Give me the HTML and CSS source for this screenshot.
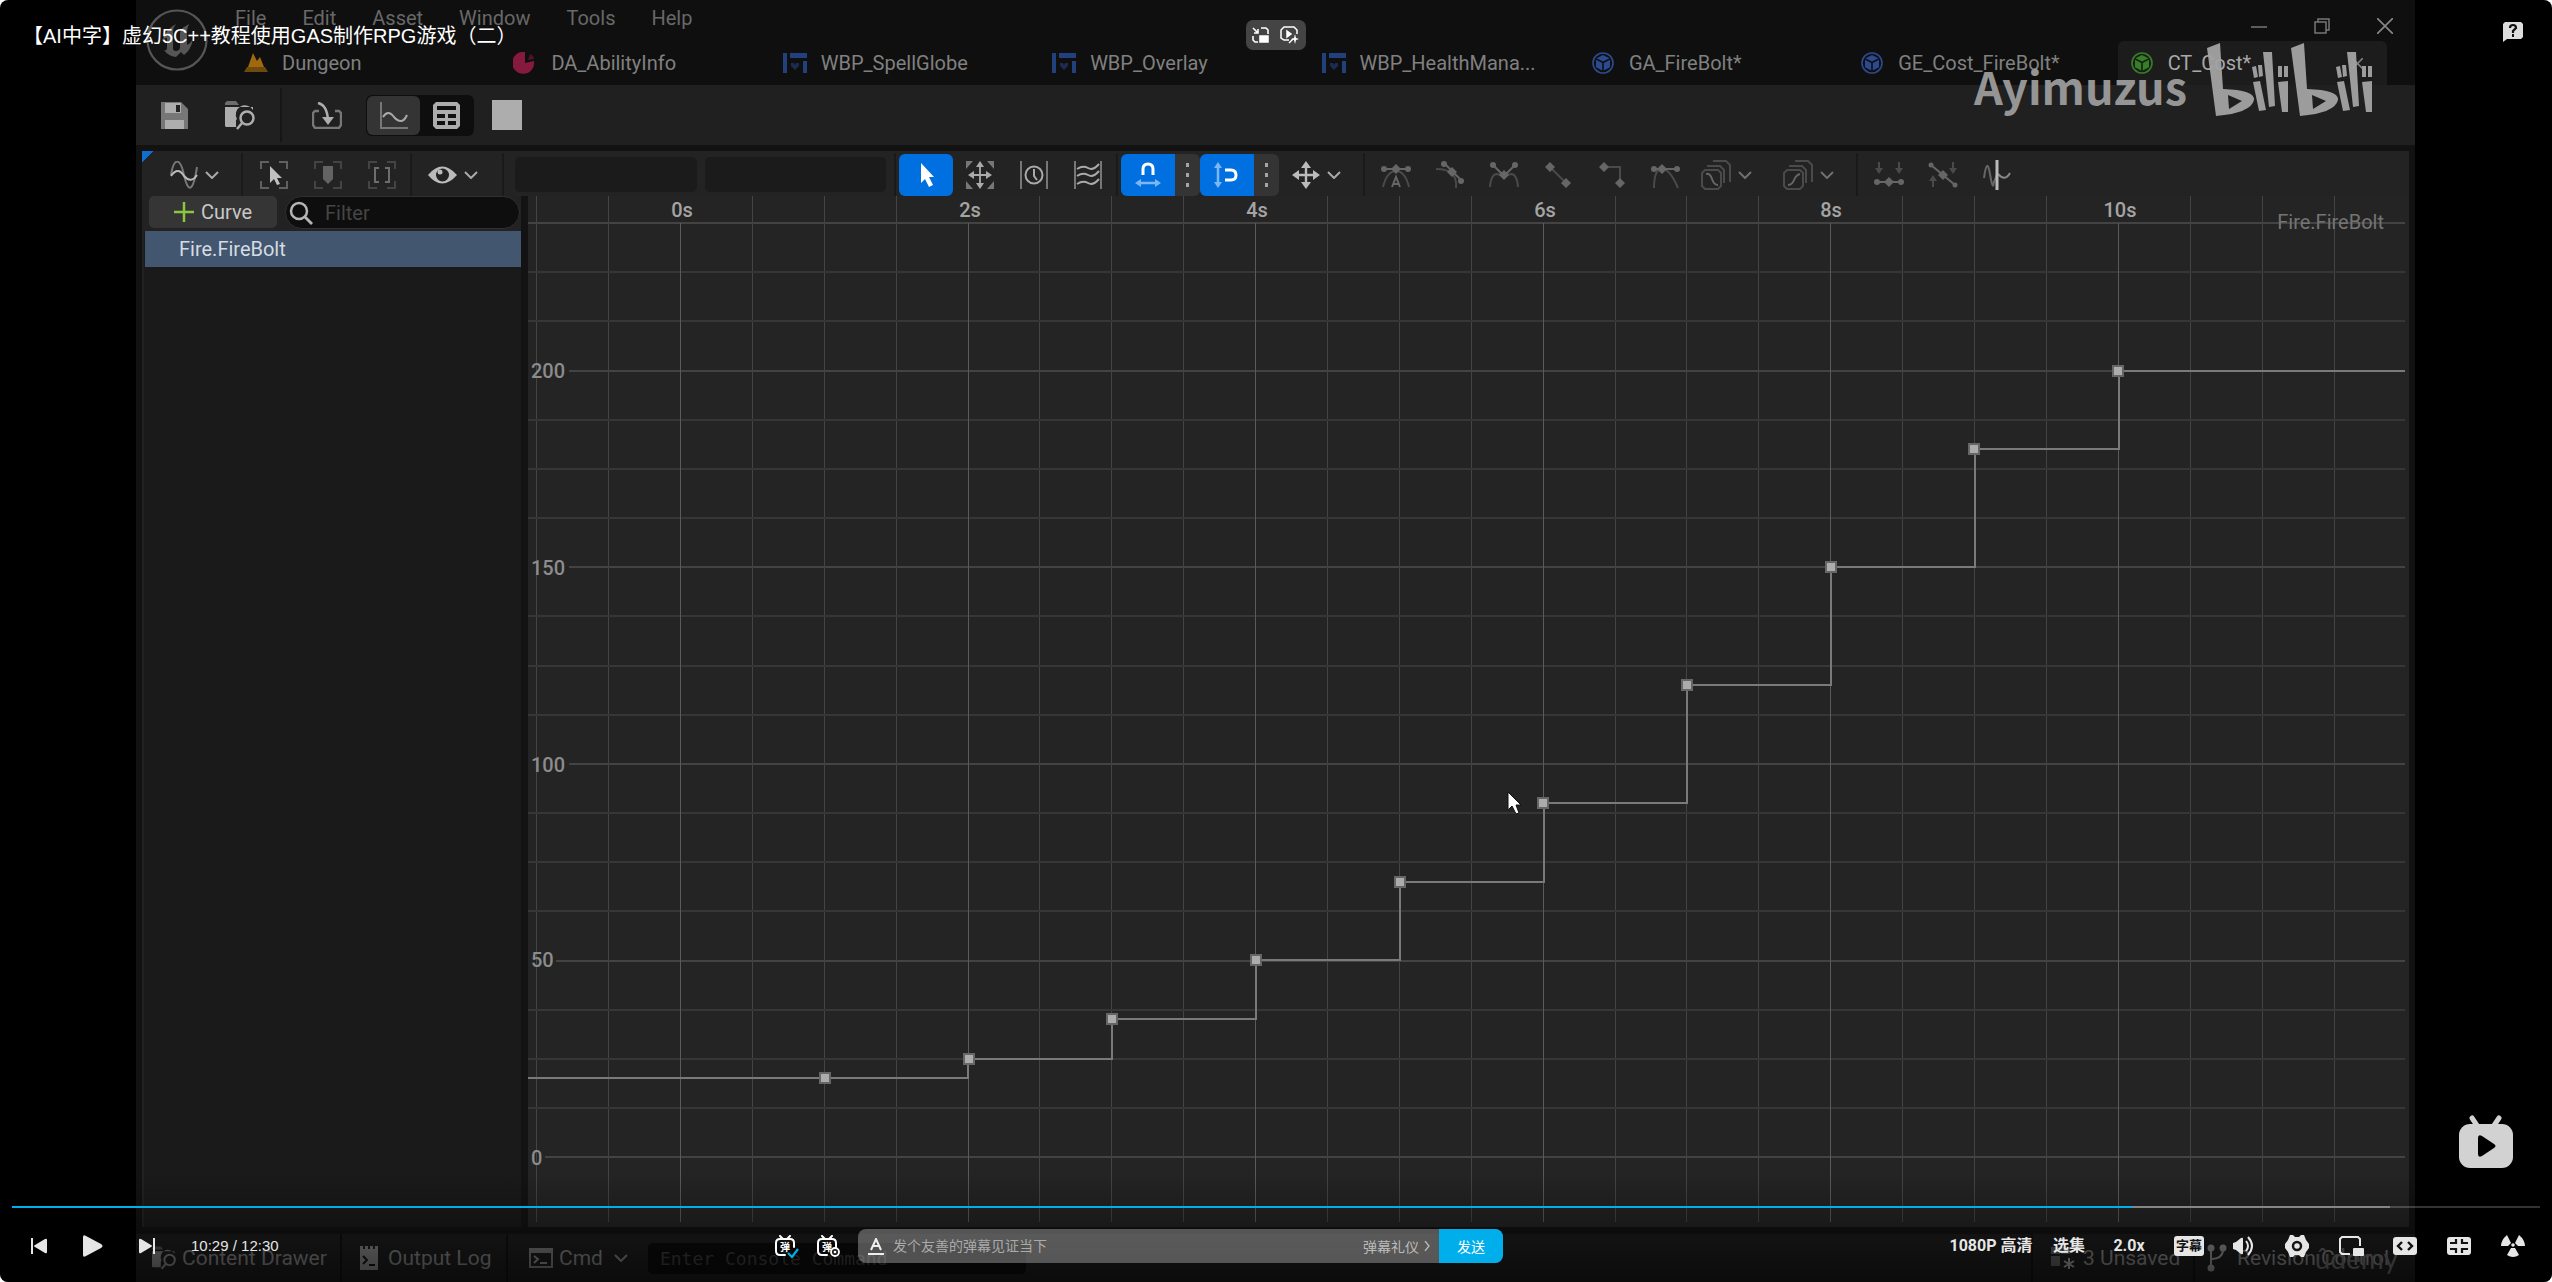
FILE: index.html
```html
<!DOCTYPE html>
<html lang="zh-CN">
<head>
<meta charset="utf-8">
<title>【AI中字】虚幻5C++教程使用GAS制作RPG游戏（二）</title>
<link rel="stylesheet" href="styles.css">
</head>
<body>
<svg class="sprite" aria-hidden="true">
  <symbol id="chev" viewBox="0 0 14 8"><path d="M1 1l6 6 6-6" fill="none" stroke="currentColor" stroke-width="2"/></symbol>
  <symbol id="widget" viewBox="0 0 24 20"><path d="M0 0h4v20H0zM7 0h17v5H7zM20 8h4v12h-4z" fill="#22407c"/><path d="M12 17l-4-4v-3h3l1 2 1-2h3v3z" fill="#1c2b50"/></symbol>
  <symbol id="cube" viewBox="0 0 22 22"><circle cx="11" cy="11" r="10" fill="none" stroke="currentColor" stroke-width="1.600"/><path d="M11 3l6.500 3.200L11 9.600 4.500 6.200zM4 7.800l6.200 3.100v7.600L4 15.200zM18 7.800l-6.200 3.100v7.600L18 15.200z" fill="currentColor"/></symbol>
  <symbol id="frame" viewBox="0 0 28 28"><path d="M1 8V1h8M19 1h8v7M27 20v7h-8M9 27H1v-7" fill="none" stroke="#606060" stroke-width="2"/></symbol>
  <symbol id="folder" viewBox="0 0 30 29"><path d="M0 4V2l2-2h9l3 4z" fill="currentColor" opacity=".55"/><path d="M0 6h28v3a9 9 0 0 0-16 9l-1 1v7H1l-1-1z" fill="currentColor"/><circle cx="22" cy="17" r="6.500" fill="none" stroke="currentColor" stroke-width="2.500"/><path d="M17 22l-5 6" stroke="currentColor" stroke-width="2.500"/></symbol>
  <symbol id="danmu" viewBox="0 0 22 22"><path d="M5 1l3 3M15 1l-3 3M10 20H5q-4 0-4-4V8q0-4 4-4h10q4 0 4 4v4" fill="none" stroke="#fff" stroke-width="2" stroke-linecap="round"/></symbol>
</svg>

<div class="player">
  <main class="video">
    <header class="titlebar">
      <svg class="unreal" viewBox="0 0 62 62"><circle cx="31" cy="31" r="29.500" fill="#141414" stroke="#565656" stroke-width="2.200"/><path d="M16 32q4-12 14-17-3 4-3 7v17q0 3 3 3t4-3V25q0-5 4-7l5-3q-2 4-2 8v13q4-2 6-6-2 11-9 16l-3-3-5 5q-8-1-12-7 3 1 3-2V30q-1-3-5 2z" fill="#555"/></svg>
      <nav class="menu"><a href="#">File</a><a href="#">Edit</a><a href="#">Asset</a><a href="#">Window</a><a href="#">Tools</a><a href="#">Help</a></nav>
      <div class="winbtns">
        <svg width="16" height="16" viewBox="0 0 16 16"><path d="M0 9h16" stroke="#777" stroke-width="1.500"/></svg>
        <svg width="16" height="16" viewBox="0 0 16 16"><path d="M1 4h11v11H1zM4 4V1h11v11h-3" fill="none" stroke="#777" stroke-width="1.500"/></svg>
        <svg width="16" height="16" viewBox="0 0 16 16"><path d="M0 0l16 16M16 0L0 16" stroke="#888" stroke-width="1.600"/></svg>
      </div>
      <nav class="tabs">
        <a class="tab" href="#"><svg width="24" height="20" viewBox="0 0 24 20"><path d="M4 14L9 0l4 8 3-4 4 10z" fill="#a0690f"/><path d="M3 14l-3 5h24l-3-5" fill="#6f4a0e"/></svg>Dungeon</a>
        <a class="tab" href="#"><svg width="24" height="22" viewBox="0 0 24 22"><path d="M12 0v11l9-2a11 11 0 1 1-9-9z" fill="#861a3e"/><path d="M15 8l2-6q4 2 4 5z" fill="#4d1528"/></svg>DA_AbilityInfo</a>
        <a class="tab" href="#"><svg width="24" height="20"><use href="#widget"/></svg>WBP_SpellGlobe</a>
        <a class="tab" href="#"><svg width="24" height="20"><use href="#widget"/></svg>WBP_Overlay</a>
        <a class="tab" href="#"><svg width="24" height="20"><use href="#widget"/></svg>WBP_HealthMana...</a>
        <a class="tab" href="#"><svg class="blue" width="24" height="22"><use href="#cube"/></svg>GA_FireBolt*</a>
        <a class="tab" href="#"><svg class="blue" width="24" height="22"><use href="#cube"/></svg>GE_Cost_FireBolt*</a>
        <a class="tab active" href="#"><svg class="green" width="24" height="22"><use href="#cube"/></svg>CT_Cost*<svg class="tabclose" width="11" height="11" viewBox="0 0 11 11"><path d="M0 0l11 11M11 0L0 11" stroke="#888" stroke-width="1.500"/></svg></a>
      </nav>
    </header>

    <div class="assetbar">
      <button class="save" aria-label="Save"><svg width="27" height="27" viewBox="0 0 27 27"><path d="M0 0h20l7 7v20H0z" fill="#777"/><path d="M4 1h16v10H4zM4 18h19v9H4z" fill="#adadad"/><path d="M15 3h4v7h-4z" fill="#222"/></svg></button>
      <button class="browse" aria-label="Browse"><svg width="30" height="29"><use href="#folder"/></svg></button>
      <button class="import" aria-label="Reimport"><svg width="30" height="27" viewBox="0 0 30 27"><path d="M7 9H3l-2 2v12l2 3h24l2-3V11l-2-2h-4" fill="none" stroke="#777" stroke-width="2.400"/><path d="M6 1q9 2 10 17" fill="none" stroke="#adadad" stroke-width="2.500"/><path d="M10 15h12l-6 8z" fill="#adadad"/></svg></button>
      <div class="viewtoggle">
        <button class="on" aria-label="Curve view"><svg width="28" height="27" viewBox="0 0 28 27"><path d="M1 0v26h27" fill="none" stroke="#777" stroke-width="2"/><path d="M3 15q5-8 11 0 8 9 13-2" fill="none" stroke="#aaa" stroke-width="2"/></svg></button>
        <button aria-label="Table view"><svg width="27" height="27" viewBox="0 0 27 27"><path d="M3 0h21l3 3v21l-3 3H3l-3-3V3z" fill="#adadad"/><path d="M4 4h19v4H4zM4 12h8v4H4zM15 12h8v4h-8zM4 19h8v4H4zM15 19h8v4h-8z" fill="#111"/></svg></button>
      </div>
      <span class="swatch"></span>
    </div>

    <div class="panel">
      <div class="curvebar">
        <div class="grp g1"><svg width="28" height="28" viewBox="0 0 28 28"><path d="M1 14C4-4 10-4 14 14s9 18 13-8" fill="none" stroke="#777" stroke-width="2"/><path d="M1 15q7-10 13 0 7 8 13-1" fill="none" stroke="#bbb" stroke-width="2"/></svg><svg class="chev" width="14" height="8"><use href="#chev"/></svg></div>
        <div class="grp g2">
          <button class="t" aria-label="Frame selection"><svg width="28" height="28" viewBox="0 0 28 28"><use href="#frame"/><path d="M10 5l12 12h-5l3 6-3 1-3-6-4 4z" fill="#c0c0c0"/></svg></button>
          <button class="t dim" aria-label="Frame playback"><svg width="28" height="28" viewBox="0 0 28 28"><use href="#frame"/><path d="M9 5h10v13l-5 5-5-5z" fill="#999"/></svg></button>
          <button class="t dim" aria-label="Frame range"><svg width="28" height="28" viewBox="0 0 28 28"><use href="#frame"/><path d="M11 7H7v14h4M17 7h4v14h-4" fill="none" stroke="#aaa" stroke-width="2"/></svg></button>
        </div>
        <div class="grp g3"><svg width="29" height="18" viewBox="0 0 29 18"><path d="M0 9Q14-8 29 9 14 26 0 9z" fill="#bbb"/><circle cx="14.500" cy="9" r="6.500" fill="#222"/><circle cx="12" cy="6" r="2.500" fill="#bbb"/></svg><svg class="chev" width="14" height="8"><use href="#chev"/></svg></div>
        <div class="grp g4"><input class="num" aria-label="Key time" type="text"><input class="num" aria-label="Key value" type="text"></div>
        <div class="grp g5">
          <button class="t sel" aria-label="Select"><svg width="28" height="28" viewBox="0 0 28 28"><path d="M9 2l13 14h-5l4 8-4 2-4-8-4 4z" fill="#fff"/></svg></button>
          <button class="t" aria-label="Transform"><svg width="28" height="28" viewBox="0 0 28 28"><path d="M0 0h7L0 8zM28 0h-7l7 8zM0 28h7l-7-8zM28 28h-7l7-8z" fill="#777"/><path d="M14 4v20M4 14h20" stroke="#aaa" stroke-width="1.800"/><path d="M14 0l4 6h-8zM14 28l4-6h-8zM2 14l6-4v8zM26 14l-6-4v8z" fill="#aaa"/></svg></button>
          <button class="t" aria-label="Retime"><svg width="28" height="28" viewBox="0 0 28 28"><path d="M1 0v28M27 0v28" stroke="#777" stroke-width="2"/><circle cx="14" cy="14" r="8.500" fill="none" stroke="#aaa" stroke-width="2"/><path d="M14 8v7l3 4" fill="none" stroke="#aaa" stroke-width="2"/></svg></button>
          <button class="t" aria-label="Multi-scale"><svg width="28" height="28" viewBox="0 0 28 28"><path d="M1 0v28M27 0v28" stroke="#777" stroke-width="2"/><path d="M3 8q6-4 11-1t11-4M3 15q6-4 11-1t11-4M3 23q6-4 11-1t11-4" fill="none" stroke="#aaa" stroke-width="2"/></svg></button>
        </div>
        <div class="grp g6">
          <button class="t sel left" aria-label="Snap time"><svg width="28" height="28" viewBox="0 0 28 28"><path d="M9 14V8q0-5 5-5t5 5v6" fill="none" stroke="#fff" stroke-width="3"/><path d="M4 22h20" stroke="#7db6f5" stroke-width="2.500"/><path d="M1 22l6-4v8zM27 22l-6-4v8z" fill="#7db6f5"/></svg></button>
          <button class="more" aria-label="Time snap options"><i></i><i></i><i></i></button>
          <button class="t sel left" aria-label="Snap value"><svg width="28" height="28" viewBox="0 0 28 28"><path d="M12 9h6q5 0 5 5t-5 5h-6" fill="none" stroke="#fff" stroke-width="3"/><path d="M5 4v20" stroke="#7db6f5" stroke-width="2.500"/><path d="M5 1l4 6H1zM5 27l4-6H1z" fill="#7db6f5"/></svg></button>
          <button class="more" aria-label="Value snap options"><i></i><i></i><i></i></button>
          <svg class="move" width="28" height="28" viewBox="0 0 28 28"><path d="M14 4v20M4 14h20" stroke="#bbb" stroke-width="2.400"/><path d="M14 0l5 7H9zM14 28l5-7H9zM0 14l7-5v10zM28 14l-7-5v10z" fill="#bbb"/></svg><svg class="chev" width="14" height="8"><use href="#chev"/></svg>
        </div>
        <div class="grp g7">
          <button class="t" aria-label="Auto tangent"><svg class="key" width="30" height="28" viewBox="0 0 30 28"><path class="arc" d="M2 26q4-16 13-16t13 16"/><path d="M4 8h22"/><circle cx="3" cy="8" r="3"/><circle cx="27" cy="8" r="3"/><path class="dot" d="M15 3l5 5-5 5-5-5z"/><path d="M11 26l4-10 4 10M12 23h6"/></svg></button>
          <button class="t" aria-label="User tangent"><svg class="key" width="30" height="28" viewBox="0 0 30 28"><path class="arc" d="M1 8q22 0 20 19"/><path d="M9 2l18 18"/><circle cx="9" cy="3" r="3"/><circle cx="26" cy="20" r="3"/><path class="dot" d="M17 6l5 5-5 5-5-5z"/></svg></button>
          <button class="t" aria-label="Break tangent"><svg class="key" width="30" height="28" viewBox="0 0 30 28"><path class="arc" d="M1 26Q2 13 8 13l7 2 7-2q6 0 7 13"/><path d="M4 4l11 11L26 4"/><circle cx="4" cy="4" r="3"/><circle cx="26" cy="4" r="3"/><path class="dot" d="M15 9l5 5-5 5-5-5z"/></svg></button>
          <button class="t" aria-label="Linear"><svg class="key" width="28" height="28" viewBox="0 0 28 28"><path class="arc" d="M6 6l16 16"/><path class="dot" d="M6 1l5 5-5 5-5-5zM22 17l5 5-5 5-5-5z"/></svg></button>
          <button class="t" aria-label="Constant"><svg class="key" width="28" height="28" viewBox="0 0 28 28"><path class="arc" d="M6 6h16v16"/><path class="dot" d="M6 1l5 5-5 5-5-5zM22 17l5 5-5 5-5-5z"/></svg></button>
          <button class="t" aria-label="Weighted"><svg class="key" width="30" height="28" viewBox="0 0 30 28"><path class="arc" d="M4 27Q4 8 12 8t16 19"/><path d="M3 8h25"/><circle cx="4" cy="8" r="3"/><circle cx="27" cy="8" r="3"/><path class="dot" d="M12 3l5 5-5 5-5-5z"/></svg></button>
          <button class="wide" aria-label="Pre-infinity"><svg class="key" width="30" height="30" viewBox="0 0 30 30"><path class="arc" d="M1 13l3-3h13l3 3v13l-3 3H4l-3-3zM6 6h13l4 4v13M12 1h13l4 4v17"/><path d="M5 14q4-1 6 5t6 6"/></svg><svg class="chev" width="14" height="8"><use href="#chev"/></svg></button>
          <button class="wide" aria-label="Post-infinity"><svg class="key" width="30" height="30" viewBox="0 0 30 30"><path class="arc" d="M1 13l3-3h13l3 3v13l-3 3H4l-3-3zM6 6h13l4 4v13M12 1h13l4 4v17"/><path d="M5 25q4 0 6-5t6-6"/></svg><svg class="chev" width="14" height="8"><use href="#chev"/></svg></button>
        </div>
        <div class="grp g8">
          <button class="t" aria-label="Flatten"><svg class="key" width="30" height="28" viewBox="0 0 30 28"><path class="arc" d="M5 1v8M25 1v8"/><path class="tip" d="M1 7h8l-4 6zM21 7h8l-4 6z"/><path d="M3 21h24"/><circle cx="3" cy="21" r="3"/><circle cx="27" cy="21" r="3"/><path class="dot" d="M15 16l5 5-5 5-5-5z"/></svg></button>
          <button class="t" aria-label="Straighten"><svg class="key" width="30" height="28" viewBox="0 0 30 28"><path class="arc" d="M5 26v-8M25 1v8"/><path class="tip" d="M1 20h8l-4-6zM21 7h8l-4 6z"/><path d="M3 4l24 20"/><circle cx="3" cy="4" r="2.500"/><circle cx="27" cy="24" r="2.500"/><path class="dot" d="M15 9l5 5-5 5-5-5z"/></svg></button>
          <button class="t" aria-label="Bake"><svg width="28" height="30" viewBox="0 0 28 30"><path d="M1 18Q4-4 7 14t4 8l3-7" fill="none" stroke="#666" stroke-width="2"/><path d="M15 14q7 8 12-1" fill="none" stroke="#888" stroke-width="2"/><path d="M14 0v30" stroke="#bbb" stroke-width="3"/></svg></button>
        </div>
      </div>

      <div class="work">
        <aside class="tree">
          <div class="treebar">
            <button class="addcurve"><svg width="20" height="20" viewBox="0 0 20 20"><path d="M10 0v20M0 10h20" stroke="#8cc63f" stroke-width="2.500"/></svg>Curve</button>
            <label class="filter"><svg width="24" height="24" viewBox="0 0 24 24"><circle cx="10" cy="10" r="8" fill="none" stroke="#b5b5b5" stroke-width="2.500"/><path d="M16 16l7 7" stroke="#b5b5b5" stroke-width="2.800"/></svg><input type="text" placeholder="Filter" aria-label="Filter"></label>
          </div>
          <div class="treerow">Fire.FireBolt</div>
        </aside>
        <svg class="graph" viewBox="0 1 1881 1031" role="img" aria-label="Fire.FireBolt curve">
          <path class="minor v" d="M8.500 0V1027M80.500 0V1027M224.500 0V1027M296.500 0V1027M368.500 0V1027M511.500 0V1027M583.500 0V1027M655.500 0V1027M799.500 0V1027M871.500 0V1027M943.500 0V1027M1087.500 0V1027M1158.500 0V1027M1230.500 0V1027M1374.500 0V1027M1446.500 0V1027M1518.500 0V1027M1662.500 0V1027M1734.500 0V1027M1806.500 0V1027"/>
          <path class="minor" d="M0 77H1877M0 126H1877M0 225H1877M0 274H1877M0 323H1877M0 421H1877M0 471H1877M0 520H1877M0 618H1877M0 667H1877M0 716H1877M0 815H1877M0 864H1877M0 913H1877"/>
          <path class="major" d="M0 28H1877M41 176H1877M41 372H1877M41 569H1877M28 766H1877M17 962H1877"/>
          <path class="major v" d="M152.500 28V1027M440.500 28V1027M727.500 28V1027M1015.500 28V1027M1302.500 28V1027M1590.500 28V1027"/>
          <g class="time"><text x="154" y="22">0s</text><text x="442" y="22">2s</text><text x="729" y="22">4s</text><text x="1017" y="22">6s</text><text x="1303" y="22">8s</text><text x="1592" y="22">10s</text></g>
          <g class="val"><text x="3" y="183">200</text><text x="3" y="380">150</text><text x="3" y="577">100</text><text x="3" y="772">50</text><text x="3" y="970">0</text></g>
          <text class="name" x="1856" y="34">Fire.FireBolt</text>
          <path class="curve" d="M0 883H440V864H584V824H728V765H872V687H1016V608H1159V490H1303V372H1447V254H1591V176H1877"/>
          <path class="pts" d="M292 878h10v10h-10zM436 859h10v10h-10zM579 819h10v10h-10zM723 760h10v10h-10zM867 682h10v10h-10zM1010 603h10v10h-10zM1154 485h10v10h-10zM1298 367h10v10h-10zM1441 249h10v10h-10zM1585 171h10v10h-10z"/>
          <path class="cursor" d="M980 597v18l4-4 4 8 3-1-3-8h5z"/>
        </svg>
      </div>
    </div>

    <footer class="statusbar">
      <span class="cell s1"><svg width="24" height="24"><use href="#folder"/></svg>Content Drawer</span>
      <span class="cell s2"><svg width="18" height="24" viewBox="0 0 18 24"><path d="M0 0h3v3h2V0h3v3h2V0h3v3h2V0h3v24H0z" fill="#858585"/><path d="M3 10l4 4-4 4M9 19h6" fill="none" stroke="#111" stroke-width="1.800"/></svg>Output Log</span>
      <span class="cell s3"><svg width="24" height="20" viewBox="0 0 24 20"><path d="M1 1h22v18H1z" fill="none" stroke="#777" stroke-width="2"/><path d="M0 0h24v5H0z" fill="#777"/><path d="M5 8l4 3-4 4M11 15h7" fill="none" stroke="#888" stroke-width="2"/></svg>Cmd<svg class="chev" width="14" height="8"><use href="#chev"/></svg><input class="console" type="text" placeholder="Enter Console Command" aria-label="Console command"></span>
      <span class="cell s4"><svg width="24" height="22" viewBox="0 0 24 22"><path d="M0 0h9v7H0zM10 0h9v7h-9zM0 9h9v10H0z" fill="#5a5a5a"/><path d="M18 11v11M13 14l10 6M23 14l-10 6" stroke="#999" stroke-width="2"/></svg>3 Unsaved</span>
      <span class="cell s5"><svg width="20" height="28" viewBox="0 0 20 28"><circle cx="4" cy="4" r="3.500" fill="#909090"/><circle cx="16" cy="4" r="3.500" fill="#909090"/><circle cx="4" cy="24" r="3.500" fill="#909090"/><path d="M4 5v18M16 5q0 10-12 10" fill="none" stroke="#909090" stroke-width="2"/></svg>Revision Control<span class="udemy">ûdemy</span></span>
    </footer>
  </main>

  <div class="shade"></div>
  <h1 class="title">【AI中字】虚幻5C++教程使用GAS制作RPG游戏（二）</h1>
  <div class="watermark"><span>Ayimuzus</span>
    <svg width="166" height="74" viewBox="0 0 166 74" fill="#a3a3a3"><g id="bl"><path d="M0 5L13 0l3 46q32 1 31 11-3 13-38 16z"/><path d="M21 52l14 6-13 8z" fill="#1f1f1f"/><path d="M46 39l7-1 6 29-7 1zM56 9h9l3 54-6 1zM71 39l10-1v31h-6zM45 24l4-1 2 11-4 1zM51 22h4l1 11-4 1zM71 23h4v11h-4zM77 23h4v11h-4z"/></g><use href="#bl" x="84"/></svg>
  </div>
  <div class="pill">
    <button aria-label="小窗播放"><svg width="17" height="16" viewBox="0 0 17 16" fill="none" stroke="#fff" stroke-width="1.600"><path d="M1 1l5 5M2 6h4V2M9 1h5l2 2v4M1 9v4l2 2h3"/><path d="M8 9h8v6H8z" fill="#fff"/></svg></button>
    <button aria-label="画面特效"><svg width="19" height="18" viewBox="0 0 19 18" fill="none" stroke="#fff" stroke-width="1.500"><path d="M9 14H4l-3-2V4l3-3h10l3 3v4"/><path d="M7 5l4 3-4 3z" fill="#fff"/><path d="M9 17l4-4"/><path d="M15 8l1 4 3 1-3 1-1 4-1-4-3-1 3-1z" fill="#fff" stroke="none"/></svg></button>
  </div>
  <button class="help" aria-label="帮助"><svg width="20" height="20" viewBox="0 0 20 20"><path d="M2 0h16l2 2v13l-2 2H4l-4 3V2z" fill="#ddd"/><path d="M7 6q0-3 3-3t3 3l-3 3v2" fill="none" stroke="#111" stroke-width="2.200"/><path d="M9 12h2v3H9z" fill="#111"/></svg></button>
  <button class="tv" aria-label="播放"><svg width="56" height="54" viewBox="0 0 56 54"><path d="M14 3l6 9M41 3l-6 9" stroke="#d2d2d2" stroke-width="5" stroke-linecap="round"/><rect x="1" y="9" width="54" height="44" rx="11" fill="#d2d2d2"/><path d="M20 23q0-4 4-2l12 8q3 2 0 4l-12 8q-4 2-4-2z" fill="#000"/></svg></button>

  <div class="progress"><span class="buffered" style="width:94.06%"></span><span class="played" style="width:83.86%"></span></div>

  <div class="controls">
    <div class="cleft">
      <button aria-label="上一个"><svg width="16" height="16" viewBox="0 0 16 16"><path d="M0 0h2v16H0zM14 1q2-1 2 1v12q0 2-2 1L4 9q-2-1 0-2z" fill="#e6e6e6"/></svg></button>
      <button aria-label="播放"><svg width="20" height="22" viewBox="0 0 20 22"><path d="M0 2q0-3 3-1l15 8q3 2 0 4L3 21q-3 2-3-1z" fill="#e6e6e6"/></svg></button>
      <button aria-label="下一个"><svg width="16" height="16" viewBox="0 0 16 16"><path d="M14 0h2v16h-2zM2 1Q0 0 0 2v12q0 2 2 1l10-6q2-1 0-2z" fill="#e6e6e6"/></svg></button>
      <span class="clock">10:29 / 12:30</span>
    </div>
    <div class="ccenter">
      <button class="dm" aria-label="弹幕开关"><svg width="22" height="22"><use href="#danmu"/></svg><b>弹</b><svg class="badge" width="12" height="10" viewBox="0 0 12 10"><path d="M1 5l4 4 6-8" fill="none" stroke="#00aeec" stroke-width="2.200"/></svg></button>
      <button class="dm" aria-label="弹幕设置"><svg width="22" height="22"><use href="#danmu"/></svg><b>弹</b><svg class="badge" width="12" height="12" viewBox="0 0 12 12"><circle cx="6" cy="6" r="4" fill="#222" stroke="#fff" stroke-width="1.800"/><circle cx="6" cy="6" r="1.300" fill="#fff"/></svg></button>
      <div class="dmbox">
        <svg width="16" height="17" viewBox="0 0 16 17"><path d="M3 12L8 1l5 11M5 8h6" fill="none" stroke="#eee" stroke-width="2"/><path d="M0 15h16v2H0z" fill="#eee"/></svg>
        <input type="text" placeholder="发个友善的弹幕见证当下" aria-label="弹幕"><a href="#">弹幕礼仪<svg width="6" height="10" viewBox="0 0 6 10"><path d="M1 0l4 5-4 5" fill="none" stroke="#bbb" stroke-width="1.300"/></svg></a>
        <button class="send">发送</button>
      </div>
    </div>
    <div class="cright">
      <button class="q">1080P 高清</button><button class="ep">选集</button><button class="sp">2.0x</button>
      <button class="ic" aria-label="字幕"><span class="cc">字幕</span></button>
      <button class="ic" aria-label="音量"><svg width="21" height="20" viewBox="0 0 21 20"><path d="M0 7l3-1 5-4q2-1 2 1v14q0 2-2 1l-5-4-3-1z" fill="#e6e6e6"/><path d="M13 5q4 5 0 10M15 1q8 9 0 18" fill="none" stroke="#e6e6e6" stroke-width="2"/></svg></button>
      <button class="ic" aria-label="设置"><svg width="24" height="22" viewBox="0 0 24 22"><path d="M5 0h3l2 2h4l2-2h3l2 5 3 4v4l-3 4-2 5h-3l-2-2h-4l-2 2H5l-2-5-3-4V9l3-4z" fill="#e6e6e6"/><circle cx="12" cy="11" r="4" fill="#e6e6e6" stroke="#161616" stroke-width="2.500"/></svg></button>
      <button class="ic" aria-label="画中画"><svg width="25" height="20" viewBox="0 0 25 20"><path d="M11 18H3l-2-2V3l2-2h16l2 2v7" fill="none" stroke="#e6e6e6" stroke-width="2"/><rect x="14" y="12" width="11" height="8" rx="1" fill="#e6e6e6"/></svg></button>
      <button class="ic" aria-label="宽屏"><svg width="24" height="18" viewBox="0 0 24 18"><rect width="24" height="18" rx="3" fill="#e6e6e6"/><path d="M9 5L5 9l4 4M15 5l4 4-4 4" fill="none" stroke="#111" stroke-width="2.400"/></svg></button>
      <button class="ic" aria-label="网页全屏"><svg width="24" height="18" viewBox="0 0 24 18"><rect width="24" height="18" rx="3" fill="#e6e6e6"/><path d="M3 6h6V2M21 6h-6V2M3 12h6v4M21 12h-6v4" fill="none" stroke="#111" stroke-width="2.200"/></svg></button>
      <button class="ic" aria-label="退出全屏"><svg width="24" height="22" viewBox="0 0 24 22"><path d="M6 0l4 8-3 3H0q0-6 6-11zM18 0l-4 8 3 3h7q0-6-6-11zM10 13h4l4 7q-6 4-12 0z" fill="#e6e6e6"/><circle cx="12" cy="10" r="1.800" fill="#e6e6e6"/></svg></button>
    </div>
  </div>
</div>
</body>
</html>
```
FILE: styles.css
```css
* { box-sizing: border-box; }
body { margin: 0; background: #fff; font-family: "Liberation Sans", "Noto Sans CJK SC", sans-serif; }
svg { display: block; flex: none; }
button { margin: 0; padding: 0; border: 0; background: none; color: inherit; font: inherit; }
a { color: inherit; text-decoration: none; }
input { min-width: 0; border: 0; outline: 0; font: inherit; }
.sprite { position: absolute; width: 0; height: 0; }

.player { position: relative; height: 100vh; border-radius: 8px; overflow: hidden; background: #000; }
.video { display: flex; flex-direction: column; height: 100%; margin: 0 137px 0 136px; background: #121212; font-family: Roboto, sans-serif; font-size: 20px; line-height: 24px; color: #808080; }

/* editor title bar */
.titlebar { position: relative; display: flex; flex-wrap: wrap; height: 85px; background: #0f0f0f; }
.unreal { position: absolute; left: 10px; top: 9px; width: 62px; height: 62px; }
.menu { display: flex; flex: 1; gap: 36px; height: 41px; padding: 6px 0 0 99px; color: #686868; }
.winbtns { display: flex; gap: 47px; padding: 18px 22px 0 0; }
.tabs { display: flex; width: 100%; height: 44px; padding: 0 28px 0 96px; }
.tab { display: flex; flex: 1 1 0; align-items: center; gap: 14px; padding: 0 12px; white-space: nowrap; }
.tab.active { background: #1c1c1c; border-radius: 6px 6px 0 0; color: #a8a8a8; }
.tabclose { margin-left: auto; margin-right: 12px; }
.blue { color: #2c4a90; }
.green { color: #357f25; }

/* asset toolbar */
.assetbar { display: flex; align-items: center; height: 60px; padding-left: 25px; background: #202020; color: #adadad; }
.browse { margin-left: 37px; padding-right: 25px; height: 54px; border-right: 2px solid #161616; }
.import { margin-left: 30px; }
.viewtoggle { display: flex; margin-left: 24px; height: 41px; background: #0e0e0e; border-radius: 6px; padding: 1px; }
.viewtoggle button { display: grid; place-items: center; width: 53px; }
.viewtoggle .on { background: #343434; border-radius: 6px; }
.swatch { width: 30px; height: 30px; margin-left: 18px; background: #adadad; }

.panel { display: flex; flex: 1; min-height: 0; flex-direction: column; margin: 6px 6px 7px; background: #242424; }

/* curve toolbar */
.curvebar { display: flex; height: 45px; padding-top: 2px; background: linear-gradient(135deg, #0f6fd0 8px, #232323 8px); color: #aaa; }
.grp { display: flex; align-items: center; border-right: 2px solid #1a1a1a; }
.grp:last-child { border-right: 0; }
.chev { margin-left: 7px; }
.g1 { width: 101px; padding-left: 28px; }
.g2 { width: 169px; padding-left: 4px; }
.g3 { width: 92px; padding-left: 16px; }
.g4 { width: 392px; gap: 8px; padding: 0 8px 0 11px; }
.g5 { width: 222px; padding-left: 3px; }
.g6 { width: 247px; padding-left: 3px; }
.g7 { width: 493px; padding-left: 4px; }
.g8 { padding-left: 4px; }
.num { flex: 1; height: 35px; background: #1b1b1b; border-radius: 5px; }
.t { display: grid; place-items: center; width: 54px; height: 42px; }
.dim { opacity: .55; }
.sel { background: #0070e0; border-radius: 6px; }
.sel.left { border-radius: 6px 0 0 6px; }
.more { display: flex; flex-direction: column; justify-content: center; align-items: center; gap: 6px; width: 25px; height: 42px; background: #343434; border-radius: 0 6px 6px 0; }
.more i { width: 3px; height: 4px; background: #a5a5a5; }
.move { margin-left: 13px; }
.wide { display: flex; align-items: center; width: 82px; padding-left: 9px; color: #707070; }
.key { fill: none; stroke: #666; stroke-width: 2; }
.key circle, .key .dot { fill: #666; stroke: none; }
.key .arc { stroke: #4a4a4a; }
.key .tip { fill: #4a4a4a; stroke: none; }

.work { display: flex; flex: 1; min-height: 0; }
.tree { width: 386px; background: #1a1a1a; border-right: 7px solid #131313; border-left: 2px solid #222; }
.treebar { display: flex; gap: 8px; padding: 0 0 2px 5px; background: #222; }
.addcurve { display: flex; align-items: center; justify-content: center; gap: 7px; width: 128px; height: 32px; background: #353535; border-radius: 5px; color: #c8c8c8; }
.filter { display: flex; align-items: center; flex: 1; gap: 10px; height: 33px; padding: 0 3px; margin-right: 1px; border: 1px solid #303030; border-radius: 17px; background: #0e0e0e; }
.filter input { width: 180px; background: none; color: #aaa; }
.filter input::placeholder { color: #454545; opacity: 1; }
.treerow { height: 36px; margin-left: 1px; padding-left: 34px; line-height: 36px; background: #42566f; color: #d5dbe2; }

.graph { flex: 1; min-width: 0; height: 100%; background: #242424; }
.graph path { fill: none; }
.minor { stroke: #363636; stroke-width: 2; }
.major { stroke: #434343; stroke-width: 2; }
.minor.v { stroke: #444; stroke-width: 1; }
.major.v { stroke: #5a5a5a; stroke-width: 1; }
.graph .curve { stroke: #7a7a7a; stroke-width: 2; }
.graph .pts { fill: #acacac; stroke: #666; stroke-width: 2; }
.graph .cursor { fill: #fff; stroke: #111; }
.time { fill: #a4a4a4; text-anchor: middle; font-weight: 500; }
.val { fill: #8c8c8c; font-weight: 500; }
.name { fill: #747474; text-anchor: end; }

/* editor status bar */
.statusbar { display: flex; height: 48px; background: #1c1c1c; font-size: 21px; color: #808080; }
.cell { display: flex; align-items: center; gap: 6px; border-right: 2px solid #101010; white-space: nowrap; }
.s1 { width: 206px; padding-left: 16px; }
.s2 { width: 166px; gap: 10px; padding-left: 18px; }
.s3 { flex: 1; padding-left: 21px; }
.s3 .chev { margin-left: 5px; }
.console { width: 378px; height: 31px; margin-left: 14px; padding: 0 12px; background: #0b0b0b; border-radius: 5px; font: 18px "DejaVu Sans Mono", monospace; color: #777; }
.console::placeholder { color: #3a3a3a; opacity: 1; }
.s4 { width: 162px; gap: 8px; padding-left: 18px; }
.s5 { position: relative; width: 220px; gap: 10px; padding-left: 12px; border-right: 0; }
.udemy { position: absolute; right: 17px; top: 8px; font-family: Lato, sans-serif; font-size: 28px; line-height: 32px; color: #666; }

/* player overlay */
.shade { position: absolute; left: 0; right: 0; bottom: 0; height: 110px; background: linear-gradient(transparent, rgba(0, 0, 0, .6)); pointer-events: none; }
.title { position: absolute; left: 23px; top: 21px; margin: 0; font-size: 20px; line-height: 30px; font-weight: 400; color: #fff; white-space: nowrap; }
.watermark { position: absolute; right: 179px; top: 43px; display: flex; align-items: flex-start; gap: 20px; font: 600 45px/60px "Noto Sans CJK SC", sans-serif; color: #9c9c9c; opacity: .95; }
.watermark span { padding-top: 13px; }
.pill { position: absolute; left: calc(50% - 30px); top: 20px; display: flex; align-items: center; justify-content: center; gap: 11px; width: 60px; height: 30px; padding-right: 2px; border-radius: 7px; background: #444; }
.help { position: absolute; right: 29px; top: 22px; }
.tv { position: absolute; right: 38px; bottom: 113px; }
.progress { position: absolute; left: 12px; right: 12px; bottom: 74px; height: 2px; background: rgba(255, 255, 255, .2); }
.progress span { position: absolute; left: 0; top: 0; height: 2px; }
.buffered { background: #858585; }
.played { background: #00aeec; }

.controls { position: absolute; left: 12px; right: 12px; bottom: 19px; display: flex; align-items: center; justify-content: space-between; height: 34px; color: #e6e6e6; }
.cleft { display: flex; align-items: center; width: 326px; padding-left: 19px; }
.cleft button { margin-right: 36px; }
.clock { font-size: 15px; line-height: 20px; }
.ccenter { display: flex; align-items: center; gap: 20px; }
.dm { position: relative; width: 22px; height: 22px; }
.dm b { position: absolute; left: 5px; top: 6px; font: 700 10px/12px "Noto Sans CJK SC", sans-serif; color: #fff; }
.badge { position: absolute; right: -2px; bottom: -1px; }
.dmbox { display: flex; align-items: center; width: 645px; height: 34px; margin-left: -1px; padding-left: 10px; background: rgba(255, 255, 255, .3); border-radius: 8px; overflow: hidden; font-size: 14px; }
.dmbox input { flex: 1; padding: 0 9px; background: none; color: #fff; }
.dmbox input::placeholder { color: #aaa; opacity: 1; }
.dmbox a { display: flex; align-items: center; gap: 5px; padding-right: 9px; color: #bbb; }
.send { width: 64px; height: 34px; background: #00aeec; color: #fff; }
.cright { display: flex; align-items: center; font: 700 16px/20px Roboto, "Noto Sans CJK SC", sans-serif; }
.q { width: 102px; white-space: nowrap; }
.ep { width: 54px; }
.sp { width: 66px; }
.ic { display: grid; place-items: center; width: 54px; height: 30px; }
.cc { width: 30px; height: 20px; border-radius: 3px; background: #e6e6e6; color: #111; font-size: 13px; line-height: 19px; }
```
